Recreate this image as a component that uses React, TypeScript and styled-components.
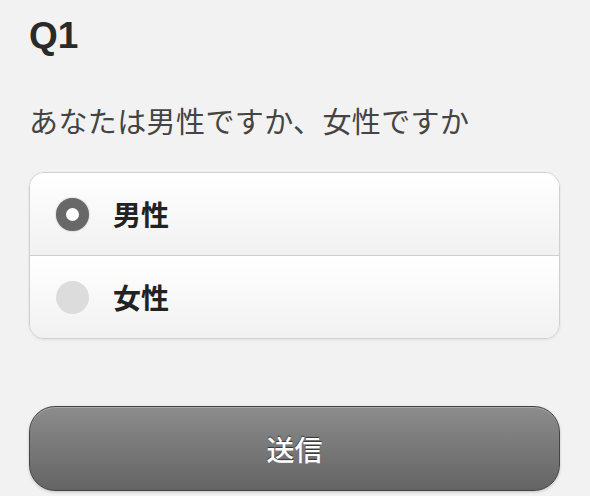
import styled, { createGlobalStyle } from 'styled-components';
import { useState } from 'react';

const GlobalStyle = createGlobalStyle`
  html, body {
    margin: 0;
    padding: 0;
    background: #f2f2f2;
  }
`;

const Page = styled.div`
  width: 590px;
  height: 496px;
  box-sizing: border-box;
  padding: 15px 30px 0 29px;
  font-family: 'Noto Sans CJK JP', 'Liberation Sans', sans-serif;
  background: #f2f2f2;
  overflow: hidden;
`;

const Heading = styled.h1`
  margin: 0;
  font-family: 'Liberation Sans', Arial, sans-serif;
  font-size: 37px;
  line-height: 42px;
  font-weight: 700;
  color: #2a2a2a;
`;

const Question = styled.p`
  margin: 43px 0 0;
  font-size: 29px;
  line-height: 40px;
  color: #444;
  letter-spacing: 0.4px;
`;

const OptionList = styled.div`
  margin-top: 32px;
  border: 1px solid #cfcfcf;
  border-radius: 15px;
  overflow: hidden;
  box-shadow: 0 1px 3px rgba(0, 0, 0, 0.08);
`;

const OptionRow = styled.label<{ $first?: boolean }>`
  display: flex;
  align-items: center;
  height: 82px;
  padding-left: 26px;
  gap: 24px;
  border-top: ${(p) => (p.$first ? 'none' : '1px solid #cfcfcf')};
  background: linear-gradient(#ffffff, #f1f1f1);
  cursor: pointer;
`;

const Radio = styled.span<{ $checked: boolean }>`
  width: 33px;
  height: 33px;
  border-radius: 50%;
  box-sizing: border-box;
  background: ${(p) => (p.$checked ? '#fff' : '#dcdcdc')};
  border: ${(p) => (p.$checked ? '10px solid #686868' : 'none')};
  box-shadow: ${(p) => (p.$checked ? '0 0 2px rgba(0, 0, 0, 0.3)' : 'none')};
  flex-shrink: 0;
`;

const OptionText = styled.span`
  font-size: 28px;
  font-weight: 700;
  color: #222;
`;

const Submit = styled.button`
  display: block;
  width: 100%;
  height: 85px;
  margin-top: 67px;
  border: 1px solid #444;
  border-radius: 26px;
  background: linear-gradient(#8c8c8c, #646464);
  box-shadow: inset 0 1px 0 rgba(255, 255, 255, 0.25), 0 1px 3px rgba(0, 0, 0, 0.2);
  color: #fff;
  font-family: 'Noto Sans CJK JP', sans-serif;
  font-size: 28px;
  font-weight: 500;
  text-shadow: 0 -1px 1px #333;
  cursor: pointer;
`;

const options = ['男性', '女性'];

export default function App() {
  const [selected, setSelected] = useState(0);
  return (
    <>
      <GlobalStyle />
      <Page>
        <Heading>Q1</Heading>
        <Question>あなたは男性ですか、女性ですか</Question>
        <OptionList>
          {options.map((o, i) => (
            <OptionRow key={o} $first={i === 0} onClick={() => setSelected(i)}>
              <Radio $checked={selected === i} />
              <OptionText>{o}</OptionText>
            </OptionRow>
          ))}
        </OptionList>
        <Submit>送信</Submit>
      </Page>
    </>
  );
}
